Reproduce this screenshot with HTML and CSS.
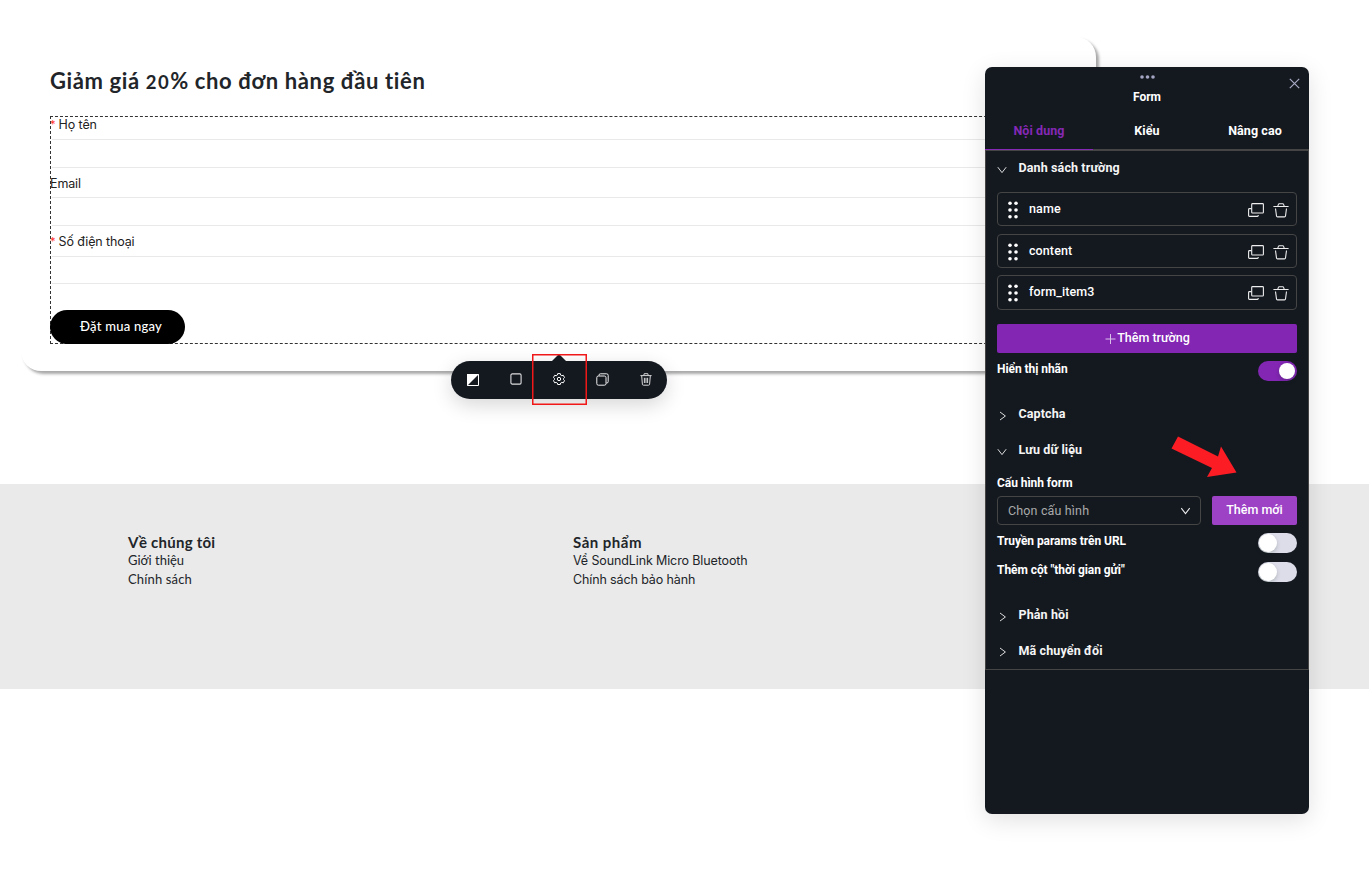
FILE: index.html
```html
<!DOCTYPE html>
<html lang="vi">
<head>
<meta charset="utf-8">
<title>Form</title>
<link rel="stylesheet" href="styles.css">
</head>
<body>
<svg class="defs" width="0" height="0">
  <symbol id="down" viewBox="0 0 10 8"><path d="M.8 1.2 5 6.6 9.2 1.2"/></symbol>
  <symbol id="right" viewBox="0 0 8 10"><path d="M1 1 6.4 5 1 9"/></symbol>
  <symbol id="grip" viewBox="0 0 10 18"><g fill="#fff" stroke="none"><circle cx="2" cy="2.2" r="1.8"/><circle cx="8" cy="2.2" r="1.8"/><circle cx="2" cy="9" r="1.8"/><circle cx="8" cy="9" r="1.8"/><circle cx="2" cy="15.8" r="1.8"/><circle cx="8" cy="15.8" r="1.8"/></g></symbol>
  <symbol id="dup" viewBox="0 0 16 14"><rect x="3.700" y=".6" width="11.700" height="9.400" rx=".8"/><path d="M3.500 5.600H1.400a.8.8 0 0 0-.8.8v6.200a.8.8 0 0 0 .8.8h8a.8.8 0 0 0 .8-.8v-.6"/></symbol>
  <symbol id="bin" viewBox="0 0 16 16"><path d="M.4 4.500H15.600M4.800 4 5.400 2.400a1 1 0 0 1 .9-.7h3.400a1 1 0 0 1 .9.7l.6 1.600M2.500 6.500 3.500 14a1 1 0 0 0 1 .9h7a1 1 0 0 0 1-.9l1-7.500"/></symbol>
</svg>
<main class="hero">
  <section class="card">
    <h1>Giảm giá <span class="num">20</span>% cho đơn hàng đầu tiên</h1>
    <form class="form">
      <label class="lbl"><i>*</i>Họ tên</label><div class="input"></div>
      <label class="lbl plain">Email</label><div class="input"></div>
      <label class="lbl l3"><i>*</i>Số điện thoại</label><div class="input i3"></div>
      <button type="button" class="buy">Đặt mua ngay</button>
    </form>
  </section>
  <div class="toolbar">
    <svg width="12" height="12" viewBox="0 0 12 12"><path d="M.5.5h11v11H.5z" fill="none" stroke="#fff"/><path d="M0 0h12L0 12z" fill="#fff"/></svg>
    <svg width="12" height="12" viewBox="0 0 12 12"><rect x=".9" y=".9" width="10.200" height="10.200" rx="1.300" fill="none" stroke="#ddd" stroke-width="1.100"/></svg>
    <svg width="12" height="12" viewBox="0 0 12 12" fill="none" stroke="#fff" stroke-width="1"><path d="M4.700.6h2.600l.4 1.500 1.100.6 1.500-.4 1.200 2.200-1 1.100v.9l1 1.100-1.200 2.200-1.500-.4-1.100.6-.4 1.500H4.700l-.4-1.500-1.100-.6-1.500.4L.5 7.600l1-1.100v-.9l-1-1.100 1.200-2.200 1.500.4 1.100-.6z" stroke-linejoin="round"/><circle cx="6" cy="6" r="1.700"/></svg>
    <svg width="13" height="13" viewBox="0 0 13 13" fill="none" stroke="#eee"><rect x=".8" y="3" width="9.200" height="9.200" rx="1.600"/><path d="M3 2.800V2.200A1.400 1.400 0 0 1 4.400.8h6.200a1.600 1.600 0 0 1 1.600 1.600v6.200a1.400 1.400 0 0 1-1.400 1.400h-.6"/></svg>
    <svg width="12" height="13" viewBox="0 0 12 13" fill="none" stroke="#e2e2e2" stroke-width=".95"><path d="M.4 2.600h11.200M3.800 2.300l.4-1.600h3.600l.4 1.600M1.700 2.900l.7 8.400a1 1 0 0 0 1 .9h5.200a1 1 0 0 0 1-.9l.7-8.400M4.400 4.800v5.200M6 4.800v5.200M7.600 4.800v5.200"/></svg>
    <span class="tip"></span><span class="mark"></span>
  </div>
</main>
<footer class="footer">
  <div class="col"><h2>Về chúng tôi</h2><p>Giới thiệu</p><p class="wide">Chính sách</p></div>
  <div class="col second"><h2>Sản phẩm</h2><p>Vể SoundLink Micro Bluetooth</p><p>Chính sách bảo hành</p></div>
</footer>

<aside class="panel">
  <header class="head">
    <svg class="dots" width="15" height="4" viewBox="0 0 15 4" fill="#a3a5c2"><circle cx="2" cy="2" r="1.800"/><circle cx="7.500" cy="2" r="1.800"/><circle cx="13" cy="2" r="1.800"/></svg>
    <div class="title">Form</div>
    <svg class="close" width="11" height="11" viewBox="0 0 11 11" stroke="#a9abc4" stroke-width="1.200"><path d="M.8.800 10.200 10.200M10.200.8.800 10.200"/></svg>
  </header>
  <nav class="tabs"><span class="on">Nội dung</span><span>Kiểu</span><span>Nâng cao</span></nav>
  <div class="body">
    <div class="sec s1"><svg class="dn"><use href="#down"/></svg><span>Danh sách trường</span></div>
    <div class="list">
      <div class="item"><svg class="grip"><use href="#grip"/></svg><span>name</span><svg class="dup"><use href="#dup"/></svg><svg class="bin"><use href="#bin"/></svg></div>
      <div class="item"><svg class="grip"><use href="#grip"/></svg><span>content</span><svg class="dup"><use href="#dup"/></svg><svg class="bin"><use href="#bin"/></svg></div>
      <div class="item last"><svg class="grip"><use href="#grip"/></svg><span>form_item3</span><svg class="dup"><use href="#dup"/></svg><svg class="bin"><use href="#bin"/></svg></div>
    </div>
    <button type="button" class="add"><svg width="11" height="11" viewBox="0 0 11 11" stroke="#d9c2ea"><path d="M5.500 1v10M.5 6h10"/></svg>Thêm trường</button>
    <div class="row r1"><span>Hiển thị nhãn</span><b class="switch active"></b></div>
    <div class="sec s2"><svg class="rt"><use href="#right"/></svg><span>Captcha</span></div>
    <div class="sec s3"><svg class="dn"><use href="#down"/></svg><span>Lưu dữ liệu</span></div>
    <div class="cap">Cấu hình form</div>
    <div class="config"><div class="select"><span>Chọn cấu hình</span><svg><use href="#down"/></svg></div><button type="button" class="new">Thêm mới</button></div>
    <div class="row r2"><span>Truyền params trên URL</span><b class="switch"></b></div>
    <div class="row r3"><span>Thêm cột "thời gian gửi"</span><b class="switch"></b></div>
    <div class="sec s4"><svg class="rt"><use href="#right"/></svg><span>Phản hồi</span></div>
    <div class="sec s5"><svg class="rt"><use href="#right"/></svg><span>Mã chuyển đổi</span></div>
  </div>
</aside>
<svg class="arrow" width="68" height="43" viewBox="0 0 68 43"><path d="M8 .5 48 20.500 51 10.500 66.500 36.500 37 41 42 32 1.500 12.500z" fill="#fc1c24"/></svg>
</body>
</html>
```
FILE: styles.css
```css
* { box-sizing: border-box; }
body { margin: 0; height: 877px; position: relative; overflow: hidden; background: #fff; color: #212529; font-family: Inter, sans-serif; font-size: 13px; }
button { border: 0; padding: 0; }
.defs { position: absolute; }
svg { flex: none; display: block; }
.hero { height: 484px; padding: 37px 0 0 21px; position: relative; }
.card { width: 1075px; height: 334px; padding: 29px 0 0 29px; border-radius: 20px; box-shadow: 3px 3px 3px -.5px rgba(0,0,0,.34); background: #fff; }
h1 { margin: 0; height: 50px; font: 700 22px/30px Lato, sans-serif; letter-spacing: .62px; white-space: nowrap; }
.num { font-size: 18.500px; letter-spacing: 1.500px; }
.form { width: 1017px; height: 228px; border: 1px dashed #333; display: flex; flex-direction: column; align-items: flex-start; }
.form > * { flex: none; }
.lbl { height: 22px; line-height: 16px; font-size: 12.500px; letter-spacing: -.12px; color: #222; display: flex; gap: 4.600px; }
.lbl i { color: #ff3030; font-style: normal; font-size: 11px; width: 4px; line-height: 15px; margin-left: -1px; }
.input { width: 100%; height: 29px; border: solid #e9e9e9; border-width: 1px 0; margin-left: 1px; }
.plain { height: 29px; line-height: 32px; margin-left: -1px; }
.l3 { height: 30px; line-height: 32px; }
.l3 i { line-height: 30px; }
.i3 { height: 28px; }
.buy { width: 135px; height: 34px; margin: 26px 0 0 -1px; padding: 0 0 2px 7px; border-radius: 17px; background: #000; color: #fff; font: 500 13px Lato, sans-serif; letter-spacing: .25px; }
.toolbar { position: absolute; left: 451px; top: 361px; width: 216px; height: 38px; border-radius: 19px; background: #141920; display: grid; grid-template-columns: repeat(5, 43.300px); place-items: center; padding-bottom: 2px; box-shadow: 0 6px 20px rgba(0,0,0,.16); }
.toolbar > svg:first-child { position: relative; top: 1px; }
.tip { position: absolute; left: 100.500px; top: -7px; border: solid transparent; border-width: 0 7.500px 7px; border-bottom-color: #141920; }
.mark { position: absolute; left: 81px; top: -7px; width: 55px; height: 51px; border: 1px solid #f01818; box-shadow: inset 0 0 0 .5px #f01818; }
.footer { height: 205px; padding: 48px 128px 0; background: #eaeaea; display: grid; grid-template-columns: 445px 1fr; }
h2 { margin: 0; font: 700 15px/20px Lato, sans-serif; letter-spacing: .25px; }
.second h2 { letter-spacing: .5px; }
.col p { margin: 0; font-family: Lato, sans-serif; font-size: 13px; line-height: 19px; white-space: nowrap; position: relative; top: -1px; }
.col p.wide { letter-spacing: .15px; }
.second p:nth-child(n) { font-family: Inter, sans-serif; font-size: 12.500px; letter-spacing: -.12px; }
.panel { position: absolute; left: 985px; top: 67px; width: 324px; height: 747px; background: #141920; border-radius: 7px; box-shadow: 0 6px 24px rgba(0,0,0,.12); color: #fff; font-family: Roboto, sans-serif; font-weight: 500; }
.head { height: 43px; padding-top: 8px; display: flex; flex-direction: column; align-items: center; position: relative; }
.title { font-size: 12px; font-weight: 700; line-height: 16px; margin-top: 10px; }
.close { position: absolute; right: 9px; top: 10.500px; }
.tabs { height: 41px; display: grid; grid-template-columns: repeat(3, 108px); text-align: center; font-size: 12.500px; letter-spacing: .08px; font-weight: 700; line-height: 42px; border-bottom: 2px solid #454545; }
.tabs .on { color: #8528b5; height: 40px; border-bottom: 1px solid #8528b5; }
.body { height: 519px; padding: 0 11px; border: solid #454545; border-width: 0 1px 1px; display: flex; flex-direction: column; }
.sec { display: flex; height: 18px; align-items: center; font-size: 12.500px; letter-spacing: .12px; font-weight: 700; color: #f5f5f5; }
.sec span { margin-left: auto; width: 278.500px; }
.sec svg { fill: none; stroke: #ddd; stroke-width: 1; position: relative; top: 3px; }
.dn { width: 10px; height: 8px; }
.rt { width: 8px; height: 10px; margin-left: 2px; }
.s1 { margin-top: 7px; }
.s5 svg { top: 2px; }
.list { margin-top: 16px; }
.item { height: 34px; margin-bottom: 8px; border: 1px solid #454545; border-radius: 4px; display: flex; align-items: center; padding: 0 7px 0 10px; }
.item.last { height: 35px; margin: -1px 0 0; padding-bottom: 1px; }
.item span { flex: 1; font-size: 12.500px; letter-spacing: .1px; margin: 0 0 2px 11px; }
.item.last span { margin-bottom: 1px; }
.item svg { fill: none; stroke: #eee; stroke-width: 1.100; }
.grip { width: 10px; height: 18px; margin-top: 2px; }
.dup { width: 16px; height: 14px; margin: 2px 9px 0 0; }
.bin { width: 16px; height: 16px; margin-top: 2px; }
.add { height: 29px; flex: none; margin-top: 14px; border-radius: 2px; background: #8226b3; color: #fff; display: flex; align-items: center; justify-content: center; font: 500 12.500px Roboto, sans-serif; gap: 1px; padding: 0 0 2px 1px; }
.add svg { position: relative; top: 1px; }
.row { height: 20px; display: flex; justify-content: space-between; font-size: 12px; letter-spacing: -.06px; font-weight: 700; line-height: 17px; }
.r1 { margin-top: 8px; }
.switch { width: 39px; height: 20px; border-radius: 10px; background: #dddde9; padding: 1px; }
.switch::before { content: ""; display: block; width: 18px; height: 18px; border-radius: 50%; background: #fff; box-shadow: 0 2px 4px rgba(0,35,11,.2); }
.active { background: #8226b3; }
.active::before { margin: 1px 0 0 20px; width: 16px; height: 16px; }
.s2 { margin-top: 23px; }
.s3 { margin-top: 18px; }
.cap { margin-top: 17px; font-size: 12px; letter-spacing: -.06px; font-weight: 700; line-height: 16px; }
.config { display: flex; gap: 11px; margin-top: 5px; }
.select { width: 204px; height: 29px; border: 1px solid #454545; border-radius: 4px; display: flex; align-items: center; justify-content: space-between; padding: 0 9px 0 10px; color: #aaa; font-size: 12.500px; letter-spacing: .15px; font-weight: 400; }
.select svg { width: 11px; height: 8px; fill: none; stroke: #eee; stroke-width: 1.100; }
.new { flex: 1; height: 29px; background: #9d41c5; color: #fff; border-radius: 2px; font: 500 12.500px Roboto, sans-serif; padding-bottom: 2px; }
.r2 { margin-top: 8px; }
.r3 { margin-top: 9px; }
.s4 { margin-top: 23px; }
.s5 { margin-top: 18px; }
.arrow { position: absolute; left: 1170px; top: 436px; }
```
